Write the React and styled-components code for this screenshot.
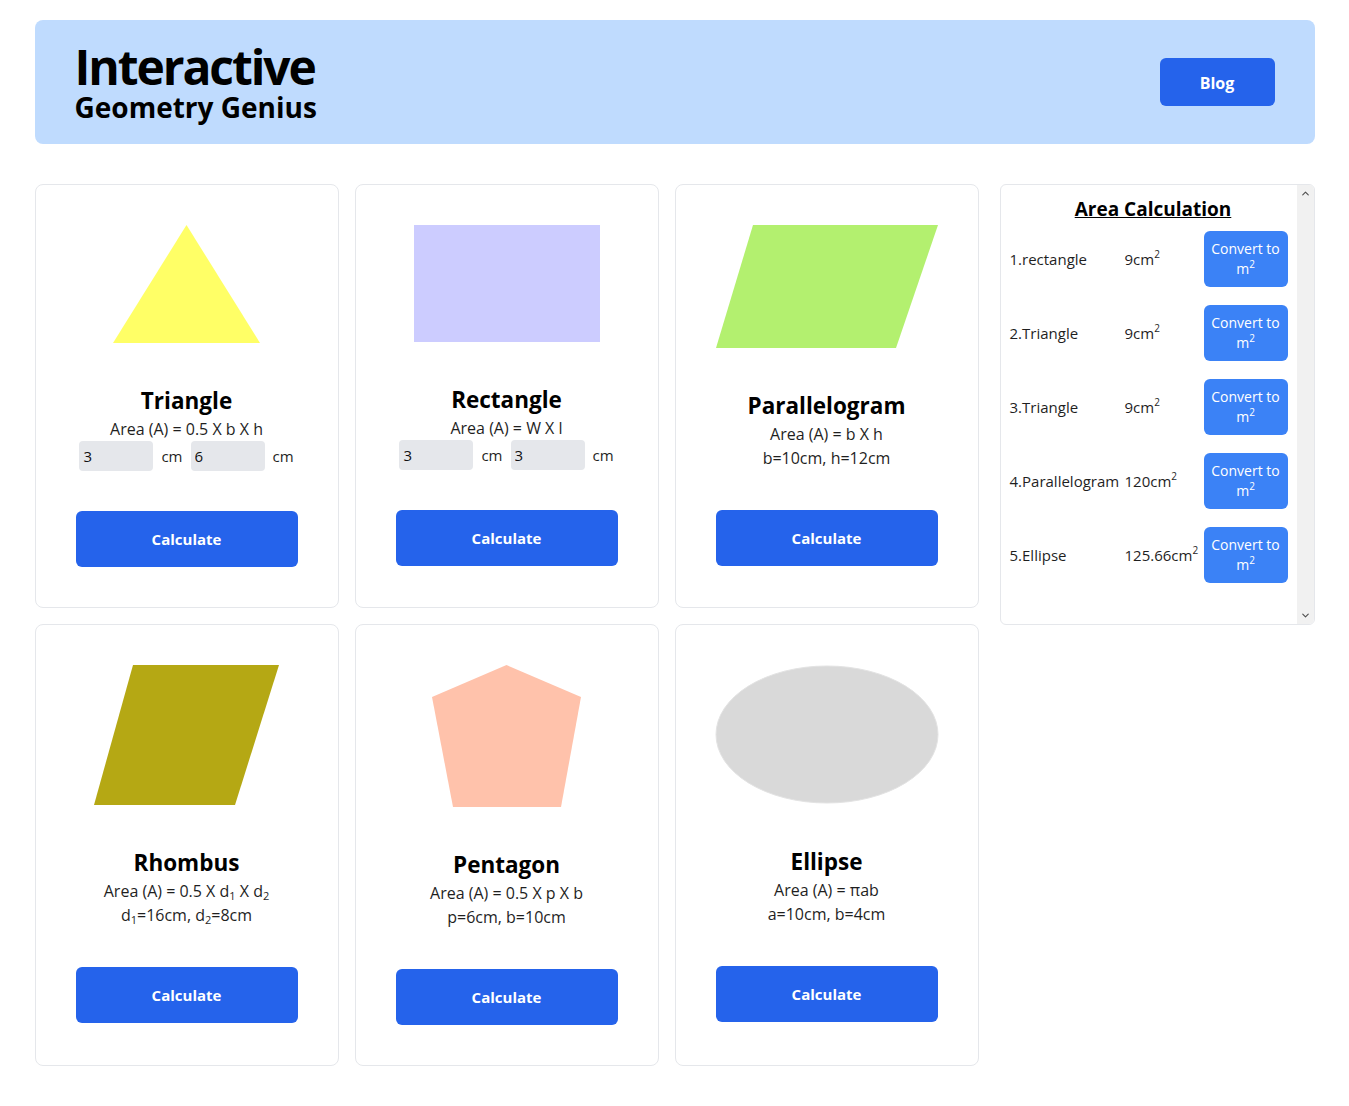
import React from "react";
import styled, { createGlobalStyle } from "styled-components";
import { ChevronUp, ChevronDown } from "lucide-react";

const GlobalStyle = createGlobalStyle`
   * {
      box-sizing: border-box;
   }

   body {
      margin: 0;
      background: #ffffff;
      color: #000000;
      font-family: "Open Sans", "Noto Sans", sans-serif;
   }
`;

const shapes = [
   {
      name: "Triangle",
      formula: "Area (A) = 0.5 X b X h",
      inputs: ["3", "6"],
      shape: (
         <svg width="147" height="118" viewBox="0 0 147 118">
            <polygon points="73.5,0 147,118 0,118" fill="#ffff66" />
         </svg>
      ),
   },
   {
      name: "Rectangle",
      formula: "Area (A) = W X l",
      inputs: ["3", "3"],
      shape: (
         <svg width="186" height="117" viewBox="0 0 186 117">
            <rect x="0" y="0" width="186" height="117" fill="#ccccff" />
         </svg>
      ),
   },
   {
      name: "Parallelogram",
      formula: "Area (A) = b X h",
      values: "b=10cm, h=12cm",
      shape: (
         <svg width="222" height="123" viewBox="0 0 222 123">
            <polygon points="37,0 222,0 180,123 0,123" fill="#b3f06f" />
         </svg>
      ),
   },
   {
      name: "Rhombus",
      formula: (
         <>
            Area (A) = 0.5 X d<sub>1</sub> X d<sub>2</sub>
         </>
      ),
      values: (
         <>
            d<sub>1</sub>=16cm, d<sub>2</sub>=8cm
         </>
      ),
      shape: (
         <svg width="185" height="140" viewBox="0 0 185 140">
            <polygon points="39,0 185,0 141,140 0,140" fill="#b5a814" />
         </svg>
      ),
   },
   {
      name: "Pentagon",
      formula: "Area (A) = 0.5 X p X b",
      values: "p=6cm, b=10cm",
      shape: (
         <svg width="149" height="142" viewBox="0 0 149 142">
            <polygon points="74.5,0 149,32 129,142 21,142 0,32" fill="#ffc2ab" />
         </svg>
      ),
   },
   {
      name: "Ellipse",
      formula: "Area (A) = πab",
      values: "a=10cm, b=4cm",
      shape: (
         <svg width="224" height="139" viewBox="0 0 224 139">
            <ellipse cx="112" cy="69.5" rx="111" ry="68.5" fill="#d9d9d9" stroke="#e3e3e3" strokeWidth="1" />
         </svg>
      ),
   },
];

const results = [
   { name: "rectangle", value: "9" },
   { name: "Triangle", value: "9" },
   { name: "Triangle", value: "9" },
   { name: "Parallelogram", value: "120" },
   { name: "Ellipse", value: "125.66" },
];

const App = () => {
   return (
      <>
         <GlobalStyle />
         <Page>
            <Header>
               <Brand>
                  <BrandTitle>Interactive</BrandTitle>
                  <BrandSub>Geometry Genius</BrandSub>
               </Brand>
               <BlogBtn>Blog</BlogBtn>
            </Header>

            <Main>
               <CardGrid>
                  {shapes.map((s) => (
                     <Card key={s.name}>
                        <ShapeBox>{s.shape}</ShapeBox>
                        <Title>{s.name}</Title>
                        <Formula>{s.formula}</Formula>
                        {s.inputs ? (
                           <InputRow>
                              <Field defaultValue={s.inputs[0]} />
                              <Unit>cm</Unit>
                              <Field defaultValue={s.inputs[1]} />
                              <Unit>cm</Unit>
                           </InputRow>
                        ) : (
                           <Formula>{s.values}</Formula>
                        )}
                        <CalcBtn>Calculate</CalcBtn>
                     </Card>
                  ))}
               </CardGrid>

               <Panel>
                  <PanelBody>
                     <PanelTitle>Area Calculation</PanelTitle>
                     <ResultList>
                        {results.map((r, i) => (
                           <ResultRow key={i}>
                              <ResultName>
                                 {i + 1}.{r.name}
                              </ResultName>
                              <ResultValue>
                                 {r.value}cm<sup>2</sup>
                              </ResultValue>
                              <ConvertBtn>
                                 Convert to
                                 <br />
                                 m<sup>2</sup>
                              </ConvertBtn>
                           </ResultRow>
                        ))}
                     </ResultList>
                  </PanelBody>
                  <ScrollTrack>
                     <ChevronUp size={11} strokeWidth={2.5} />
                     <ChevronDown size={11} strokeWidth={2.5} />
                  </ScrollTrack>
               </Panel>
            </Main>
         </Page>
      </>
   );
};

export default App;

const Page = styled.div`
   max-width: 1280px;
   margin: 0 auto;
   padding-top: 20px;
`;

const Header = styled.header`
   height: 124px;
   background-color: #bfdbfe;
   border-radius: 8px;
   padding: 4px 40px 0 40px;
   display: flex;
   align-items: center;
   justify-content: space-between;
`;

const Brand = styled.div`
   display: flex;
   flex-direction: column;
`;

const BrandTitle = styled.h1`
   margin: 0;
   font-size: 48px;
   line-height: 46px;
   font-weight: 700;
   letter-spacing: -2.1px;
`;

const BrandSub = styled.h2`
   margin: 0;
   font-size: 28px;
   line-height: 34px;
   font-weight: 700;
`;

const BlogBtn = styled.button`
   width: 115px;
   height: 48px;
   margin-top: -4px;
   padding-top: 3px;
   background-color: #2563eb;
   color: white;
   border: none;
   border-radius: 6px;
   font-family: inherit;
   font-size: 16px;
   font-weight: 700;
   cursor: pointer;
`;

const Main = styled.main`
   display: flex;
   align-items: flex-start;
   gap: 21px;
   margin-top: 40px;
`;

const CardGrid = styled.div`
   display: grid;
   grid-template-columns: repeat(3, 304px);
   column-gap: 16px;
   row-gap: 16px;
`;

const Card = styled.div`
   border: 1px solid #e5e7eb;
   border-radius: 8px;
   padding: 40px;
   display: flex;
   flex-direction: column;
   align-items: center;
   text-align: center;
`;

const ShapeBox = styled.div`
   display: flex;
   justify-content: center;

   svg {
      display: block;
   }
`;

const Title = styled.h3`
   margin: 42px 0 0 0;
   font-size: 22.5px;
   line-height: 32px;
   font-weight: 700;
`;

const Formula = styled.p`
   margin: 0;
   font-size: 16px;
   line-height: 24px;
   color: #1f1f1f;

   sub {
      font-size: 11px;
      line-height: 0;
      vertical-align: -3px;
   }
`;

const InputRow = styled.div`
   display: flex;
   align-items: center;
   gap: 8px;
`;

const Field = styled.input`
   width: 74px;
   height: 30px;
   border: none;
   border-radius: 4px;
   background-color: #e5e7eb;
   padding: 0 4px;
   font-family: inherit;
   font-size: 15px;
   color: #111;
   outline: none;
`;

const Unit = styled.span`
   font-size: 15px;
   color: #1f1f1f;
`;

const CalcBtn = styled.button`
   width: 100%;
   height: 56px;
   margin-top: 40px;
   background-color: #2563eb;
   color: white;
   border: none;
   border-radius: 6px;
   font-family: inherit;
   font-size: 15px;
   font-weight: 700;
   cursor: pointer;
`;

const Panel = styled.aside`
   width: 315px;
   height: 441px;
   border: 1px solid #e5e7eb;
   border-radius: 6px;
   overflow: hidden;
   display: flex;
`;

const PanelBody = styled.div`
   flex: 1;
   overflow-y: auto;
   padding: 10px 0 20px 9px;
`;

const ScrollTrack = styled.div`
   width: 17px;
   background-color: #f1f1f1;
   display: flex;
   flex-direction: column;
   justify-content: space-between;
   align-items: center;
   padding: 3px 0;
   color: #505050;
`;

const PanelTitle = styled.h3`
   margin: 0;
   text-align: center;
   font-size: 19px;
   line-height: 28px;
   font-weight: 700;
   text-decoration: underline;
`;

const ResultList = styled.div`
   display: flex;
   flex-direction: column;
   gap: 18px;
   margin-top: 8px;
`;

const ResultRow = styled.div`
   display: grid;
   grid-template-columns: 115px 79px 84px;
   align-items: center;
   font-size: 15px;
   color: #1f1f1f;

   sup {
      font-size: 10px;
      line-height: 0;
      vertical-align: 7px;
   }
`;

const ResultName = styled.span``;

const ResultValue = styled.span``;

const ConvertBtn = styled.button`
   height: 56px;
   background-color: #3b82f6;
   color: white;
   border: none;
   border-radius: 6px;
   font-family: inherit;
   font-size: 14px;
   line-height: 20px;
   padding: 0;
   cursor: pointer;

   sup {
      font-size: 10px;
      line-height: 0;
      vertical-align: 6px;
   }
`;
